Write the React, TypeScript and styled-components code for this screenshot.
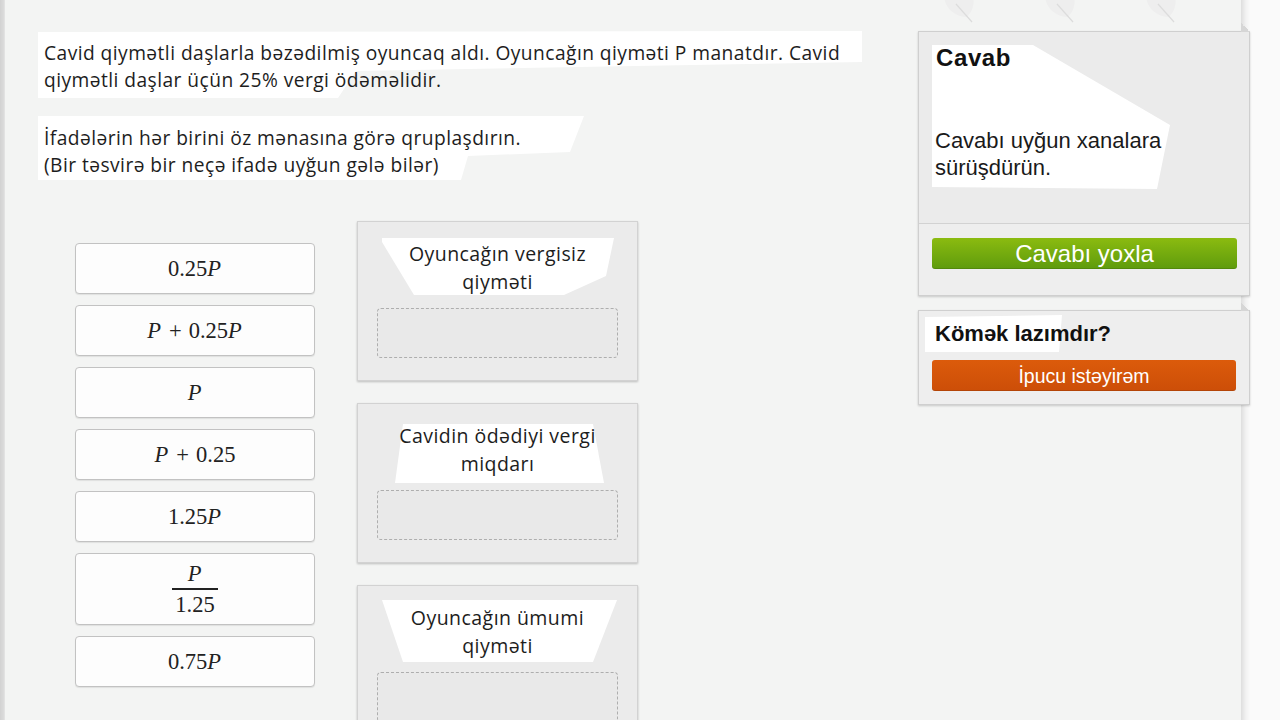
import React from 'react';
import styled, { createGlobalStyle } from 'styled-components';

const GlobalStyle = createGlobalStyle`
  html, body {
    margin: 0;
    padding: 0;
    background: #fafafa;
  }
  body {
    overflow: hidden;
  }
`;

const Page = styled.div`
  display: flex;
  width: 1280px;
  height: 720px;
  overflow: hidden;
`;

const EdgeStrip = styled.div`
  width: 5px;
  flex-shrink: 0;
  background: linear-gradient(to right, #d2d2d2, #dcdcdc 4px, #e8e8e8);
`;

const Stage = styled.main`
  position: relative;
  z-index: 1;
  width: 1236px;
  flex-shrink: 0;
  box-sizing: border-box;
  padding-left: 33px;
  background: #f3f4f3;
  display: grid;
  grid-template-columns: 840px 332px;
  column-gap: 40px;
  align-items: start;
`;

const Gutter = styled.div`
  flex: 1;
  background: linear-gradient(to right, #dedede, #f2f2f2 5px, #fafafa 9px);
`;

const Content = styled.section`
  padding-top: 31px;
  font-family: 'Open Sans', 'Noto Sans', sans-serif;
  color: #1d1d1d;
`;

const Prompt = styled.p<{ $patch: string; $pad: string }>`
  position: relative;
  isolation: isolate;
  margin: 0;
  padding: ${p => p.$pad};
  font-size: 19.2px;
  line-height: 27px;
  letter-spacing: 0.45px;

  &::before {
    content: '';
    position: absolute;
    inset: 0;
    z-index: -1;
    background: #fff;
    clip-path: ${p => p.$patch};
  }
`;

const Board = styled.div`
  display: flex;
  align-items: flex-start;
  margin-top: 41px;
`;

const TileColumn = styled.div`
  display: flex;
  flex-direction: column;
  gap: 11px;
  width: 240px;
  margin: 22px 0 0 37px;
`;

const Tile = styled.div<{ $tall?: boolean }>`
  box-sizing: border-box;
  height: ${p => (p.$tall ? 72 : 51)}px;
  display: flex;
  align-items: center;
  justify-content: center;
  background: #fdfdfd;
  border: 1px solid #c2c2c2;
  border-radius: 4px;
  box-shadow: 0 1px 1px rgba(0, 0, 0, 0.08);
  font-family: 'Liberation Serif', 'DejaVu Serif', serif;
  font-size: 22.5px;
  color: #222;
`;

const Num = styled.span``;

const Var = styled.span`
  font-style: italic;
  padding-right: 1px;
`;

const Op = styled.span`
  margin: 0 7px;
`;

const Fraction = styled.span`
  display: inline-flex;
  flex-direction: column;
  align-items: center;
  line-height: 25px;
`;

const FracTop = styled.span`
  padding: 0 4px 2px;
`;

const FracBottom = styled.span`
  border-top: 2px solid #222;
  padding: 2px 3px 0;
`;

const CategoryColumn = styled.div`
  display: flex;
  flex-direction: column;
  gap: 22px;
  width: 281px;
  margin-left: 42px;
`;

const Category = styled.div<{ $patch: string }>`
  position: relative;
  isolation: isolate;
  box-sizing: border-box;
  height: 160px;
  padding: 18px 19px 22px;
  background: #ebebeb;
  border: 1px solid #d2d2d2;
  box-shadow: 0 1px 2px rgba(0, 0, 0, 0.22);

  &::before {
    content: '';
    position: absolute;
    inset: 0;
    z-index: -1;
    background: #fff;
    clip-path: ${p => p.$patch};
  }
`;

const CategoryTitle = styled.div`
  height: 56px;
  font-size: 19.5px;
  line-height: 28px;
  letter-spacing: 0.45px;
  text-align: center;
`;

const DropZone = styled.div`
  box-sizing: border-box;
  height: 50px;
  margin-top: 12px;
  border: 1px dashed #aeaeae;
  border-radius: 4px;
  background: #e9e9e9;
`;

const Sidebar = styled.aside`
  font-family: 'Liberation Sans', Arial, sans-serif;
  color: #111;
`;

const Decor = styled.div`
  display: flex;
  gap: 55px;
  height: 31px;
  padding-left: 24px;
`;

const Card = styled.div`
  position: relative;
  isolation: isolate;
  border: 1px solid #cfcfcf;
  background: #eeeeee;
  box-shadow: 0 1px 2px rgba(0, 0, 0, 0.18);

  &::after {
    content: '';
    position: absolute;
    top: -9px;
    right: -1px;
    width: 9px;
    height: 9px;
    background: linear-gradient(to top right, #d6d6d6 50%, transparent 50%);
  }
`;

const HelpCard = styled(Card)`
  margin-top: 14px;
  box-sizing: border-box;
  height: 95px;
  padding: 9px 13px 0 13px;
`;

const Patch = styled.div<{ $clip: string }>`
  position: absolute;
  inset: 0;
  z-index: -1;
  background: #fff;
  clip-path: ${p => p.$clip};
`;

const CardHead = styled.div`
  position: relative;
  isolation: isolate;
  box-sizing: border-box;
  height: 191px;
  padding: 12px 18px 0 16px;
  background: #ebebeb;
`;

const CardTitle = styled.div<{ $size: number }>`
  font-size: ${p => p.$size}px;
  font-weight: bold;
  line-height: 28px;
  letter-spacing: ${p => (p.$size > 22 ? 0.6 : 0)}px;
  padding-left: ${p => (p.$size > 22 ? 1 : 3)}px;
`;

const CardText = styled.div`
  margin-top: 55px;
  font-size: 22px;
  line-height: 27px;
  color: #1a1a1a;
`;

const CardFoot = styled.div`
  box-sizing: border-box;
  height: 72px;
  padding: 14px 12px 0 13px;
  border-top: 1px solid #d2d2d2;
`;

const ActionButton = styled.button<{ $tone: 'green' | 'orange' }>`
  display: block;
  width: 100%;
  height: 31px;
  margin-top: ${p => (p.$tone === 'orange' ? 12 : 0)}px;
  padding: 0;
  border: none;
  border-radius: 3px;
  font-family: 'Liberation Sans', Arial, sans-serif;
  font-size: ${p => (p.$tone === 'green' ? 24 : 19.5)}px;
  line-height: 30px;
  color: #fff;
  text-align: center;
  background: ${p =>
    p.$tone === 'green'
      ? 'linear-gradient(#8bbb10, #5e9b0d)'
      : 'linear-gradient(#dc5b0b, #cc4e08)'};
  box-shadow: inset 0 -1px 0 rgba(0, 0, 0, 0.12);
`;

const Leaf: React.FC = () => (
  <svg width="46" height="24" viewBox="0 0 46 24">
    <path d="M2 -6 C 2 8, 12 16, 24 17 C 32 12, 33 0, 30 -6 Z" fill="#eeeeee" />
    <path d="M14 4 L 30 22" stroke="#dcdcdc" strokeWidth="1.2" />
  </svg>
);

const patchOne = 'polygon(0 1px, 824px 0, 824px 31px, 318px 40px, 300px 67px, 0 67px)';
const patchTwo = 'polygon(0 0, 546px 0, 532px 36px, 430px 40px, 423px 64px, 0 64px)';

const categories = [
  {
    title: ['Oyuncağın vergisiz', 'qiyməti'],
    patch: 'polygon(24px 16px, 256px 16px, 248px 54px, 206px 73px, 56px 73px, 24px 20px)',
  },
  {
    title: ['Cavidin ödədiyi vergi', 'miqdarı'],
    patch: 'polygon(45px 20px, 235px 20px, 246px 79px, 37px 79px)',
  },
  {
    title: ['Oyuncağın ümumi', 'qiyməti'],
    patch: 'polygon(24px 14px, 259px 14px, 235px 76px, 45px 76px)',
  },
];

const App: React.FC = () => {
  return (
    <Page>
      <GlobalStyle />
      <EdgeStrip />
      <Stage>
        <Content>
          <Prompt $patch={patchOne} $pad="8px 6px 5px">
            Cavid qiymətli daşlarla bəzədilmiş oyuncaq aldı. Oyuncağın qiyməti P manatdır. Cavid
            <br />
            qiymətli daşlar üçün 25% vergi ödəməlidir.
          </Prompt>
          <Prompt $patch={patchTwo} $pad="8px 6px 2px" style={{ marginTop: 18 }}>
            İfadələrin hər birini öz mənasına görə qruplaşdırın.
            <br />
            (Bir təsvirə bir neçə ifadə uyğun gələ bilər)
          </Prompt>

          <Board>
            <TileColumn>
              <Tile>
                <Num>0.25</Num>
                <Var>P</Var>
              </Tile>
              <Tile>
                <Var>P</Var>
                <Op>+</Op>
                <Num>0.25</Num>
                <Var>P</Var>
              </Tile>
              <Tile>
                <Var>P</Var>
              </Tile>
              <Tile>
                <Var>P</Var>
                <Op>+</Op>
                <Num>0.25</Num>
              </Tile>
              <Tile>
                <Num>1.25</Num>
                <Var>P</Var>
              </Tile>
              <Tile $tall>
                <Fraction>
                  <FracTop>
                    <Var>P</Var>
                  </FracTop>
                  <FracBottom>
                    <Num>1.25</Num>
                  </FracBottom>
                </Fraction>
              </Tile>
              <Tile>
                <Num>0.75</Num>
                <Var>P</Var>
              </Tile>
            </TileColumn>

            <CategoryColumn>
              {categories.map(c => (
                <Category key={c.title[0]} $patch={c.patch}>
                  <CategoryTitle>
                    {c.title[0]}
                    <br />
                    {c.title[1]}
                  </CategoryTitle>
                  <DropZone />
                </Category>
              ))}
            </CategoryColumn>
          </Board>
        </Content>

        <Sidebar>
          <Decor>
            <Leaf />
            <Leaf />
            <Leaf />
          </Decor>
          <Card>
            <CardHead>
              <Patch $clip="polygon(13px 13px, 114px 13px, 251px 93px, 238px 157px, 13px 155px)" />
              <CardTitle $size={24}>Cavab</CardTitle>
              <CardText>
                Cavabı uyğun xanalara
                <br />
                sürüşdürün.
              </CardText>
            </CardHead>
            <CardFoot>
              <ActionButton $tone="green">Cavabı yoxla</ActionButton>
            </CardFoot>
          </Card>
          <HelpCard>
            <Patch $clip="polygon(6px 6px, 143px 4px, 140px 41px, 6px 41px)" />
            <CardTitle $size={22}>Kömək lazımdır?</CardTitle>
            <ActionButton $tone="orange">İpucu istəyirəm</ActionButton>
          </HelpCard>
        </Sidebar>
      </Stage>
      <Gutter />
    </Page>
  );
};

export default App;
